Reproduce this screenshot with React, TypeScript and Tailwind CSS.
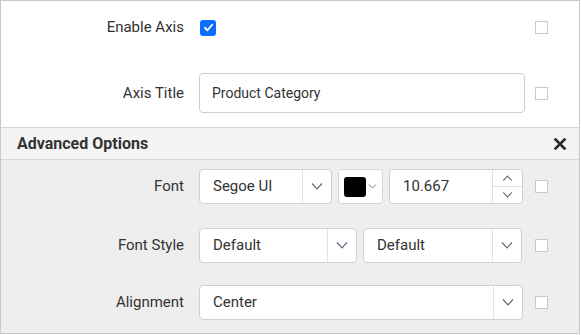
import React from "react"

// ── Small drawings ────────────────────────────────────────────────────────

function Chevron({ className = "", up = false }: { className?: string; up?: boolean }) {
  return (
    <svg viewBox="0 0 12 7" className={className} fill="none" stroke="currentColor" strokeWidth="1.2">
      {up ? <path d="M1 6.5 L6 1.2 L11 6.5" /> : <path d="M1 0.5 L6 5.8 L11 0.5" />}
    </svg>
  )
}

function Box() {
  return <div className="h-[13px] w-[13px] shrink-0 border border-[#c9c9c9] bg-white" />
}

function Select({ value, width }: { value: string; width: string }) {
  return (
    <div className={`flex h-[35px] items-stretch rounded border border-[#cfcfcf] bg-white ${width}`}>
      <div className="flex flex-1 items-center pl-[13px] text-[15px] text-[#333]">{value}</div>
      <div className="flex w-[29px] items-center justify-center border-l border-[#e3e3e3]">
        <Chevron className="h-[7px] w-[12px] text-[#5f6b7a]" />
      </div>
    </div>
  )
}

function Row({ label, children }: { label: string; children: React.ReactNode }) {
  return (
    <div className="flex items-center">
      <div className="w-[183px] text-right text-[15px] text-[#333]">{label}</div>
      <div className="ml-[15px] flex w-[326px] items-center gap-[6px]">{children}</div>
      <div className="ml-[10px]">
        <Box />
      </div>
    </div>
  )
}

// ── Page ──────────────────────────────────────────────────────────────────

export default function App() {
  return (
    <div className="h-[335px] w-[581px] bg-white" style={{ fontFamily: "Roboto, 'Liberation Sans', sans-serif" }}>
      <div className="flex h-[334px] w-[580px] flex-col border border-[#c8c8c8]">
        {/* Top section */}
        <div className="flex h-[53px] items-center">
          <div className="w-[183px] text-right text-[15px] text-[#333]">Enable Axis</div>
          <div className="ml-[16px] flex w-[325px] items-center">
            <div className="flex h-[16px] w-[16px] items-center justify-center rounded-[3px] bg-[#0d6efd]">
              <svg viewBox="0 0 12 12" className="h-[11px] w-[11px]" fill="none" stroke="white" strokeWidth="2" strokeLinecap="round" strokeLinejoin="round">
                <path d="M2 6.3 L4.8 9 L10 3" />
              </svg>
            </div>
          </div>
          <div className="ml-[10px]">
            <Box />
          </div>
        </div>

        <div className="mt-[19px] flex items-center">
          <div className="w-[183px] text-right text-[15px] text-[#333]">Axis Title</div>
          <div className="ml-[15px] flex h-[40px] w-[326px] items-center rounded border border-[#cfcfcf] bg-white pl-[12px] text-[14px] text-[#333]">
            Product Category
          </div>
          <div className="ml-[10px]">
            <Box />
          </div>
        </div>

        {/* Advanced options */}
        <div className="mt-[14px] flex h-[33px] items-center justify-between border-y border-[#d6d6d6] bg-[#f4f4f4] pl-[16px] pr-[12px]">
          <span className="text-[16px] font-bold text-[#333]">Advanced Options</span>
          <svg viewBox="0 0 12 12" className="h-[12px] w-[14px]" stroke="#2b2b2b" strokeWidth="2.6" strokeLinecap="square">
            <path d="M1.5 1.5 L10.5 10.5 M10.5 1.5 L1.5 10.5" />
          </svg>
        </div>

        <div className="flex flex-1 flex-col bg-[#eeeeee] pt-[9px]">
          <Row label="Font">
            <Select value="Segoe UI" width="w-[133px]" />
            <div className="flex h-[35px] w-[45px] items-center rounded border border-[#d6d6d6] bg-white pl-[5px]">
              <div className="h-[20px] w-[22px] rounded-[3px] bg-black" />
              <Chevron className="ml-[2px] h-[5px] w-[9px] text-[#5a6b80]" />
            </div>
            <div className="flex h-[35px] w-[134px] items-stretch rounded border border-[#cfcfcf] bg-white">
              <div className="flex flex-1 items-center pl-[13px] text-[15px] text-[#333]">10.667</div>
              <div className="flex w-[30px] flex-col border-l border-[#e0e0e0]">
                <div className="flex flex-1 items-center justify-center border-b border-[#e0e0e0]">
                  <Chevron up className="h-[6px] w-[11px] text-[#5f6b7a]" />
                </div>
                <div className="flex flex-1 items-center justify-center">
                  <Chevron className="h-[6px] w-[11px] text-[#5f6b7a]" />
                </div>
              </div>
            </div>
          </Row>

          <div className="mt-[24px]">
            <Row label="Font Style">
              <Select value="Default" width="w-[158px]" />
              <Select value="Default" width="w-[159px]" />
            </Row>
          </div>

          <div className="mt-[22px]">
            <Row label="Alignment">
              <Select value="Center" width="w-[324px]" />
            </Row>
          </div>
        </div>
      </div>
    </div>
  )
}
